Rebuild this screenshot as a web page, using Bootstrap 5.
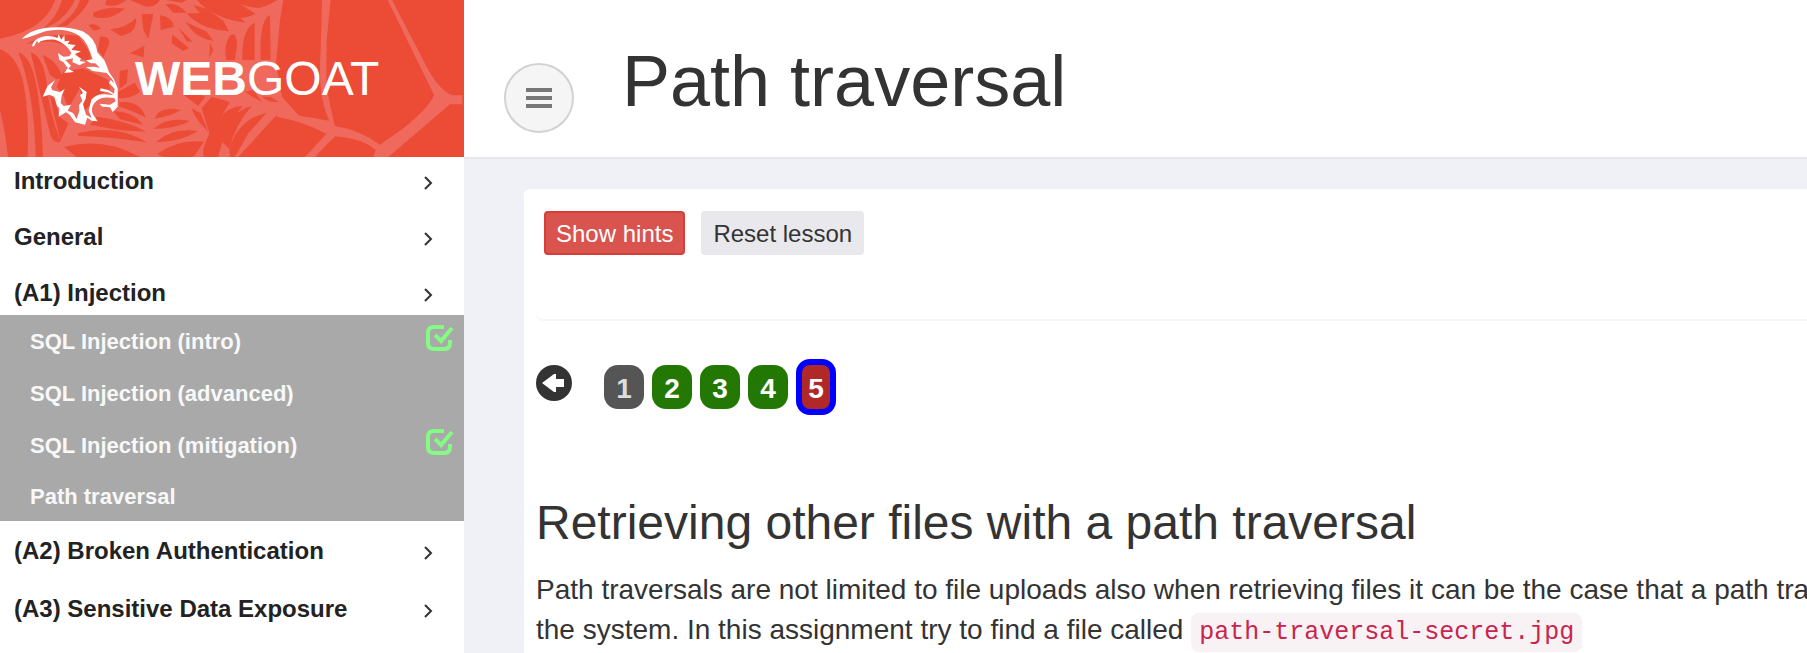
<!DOCTYPE html>
<html lang="en">
<head>
<meta charset="utf-8">
<meta name="viewport" content="width=device-width, initial-scale=1">
<title>WebGoat</title>
<link href="https://cdn.jsdelivr.net/npm/bootstrap@5.3.0/dist/css/bootstrap.min.css" rel="stylesheet">
<style>
body{font-family:"Liberation Sans",Arial,sans-serif;color:#333;background:#f0f1f7;overflow:hidden}
.side{width:464px;background:#fff}
.brand{height:157px;background:#ec4b36;overflow:hidden;padding-left:135px;color:#fff;font-size:48px;line-height:56px;position:relative}
.brand:hover{color:#fff}
.brand svg{position:absolute;left:0;top:0}
.brand span{position:relative}
.menu{gap:12px;padding-top:2px}
.menu.lower{gap:14px;padding-top:8px}
.menu a{height:44px;padding:0 31px 0 14px;font-size:24px;font-weight:700;color:#222}
.menu a svg{margin-top:4px}
.submenu{background:#a9a9a9}
.submenu a{height:52px;padding:0 10px 0 30px;font-size:22px;font-weight:700;color:#f8f8f8}
.submenu li:last-child a{height:50px}
.submenu svg{margin-bottom:6px}
.top-bar{height:159px;background:#fff;border-bottom:2px solid #e6e6eb;padding:0 40px}
.toggle{width:70px;height:70px;margin-top:39px;border:2px solid #d2d2d2;background:#f5f5f5}
.page-title{font-size:72px;line-height:80px;margin-left:48px;padding-top:4px}
.lesson{margin:30px 0 0 60px;padding-left:12px;background:#fff;border-radius:6px 0 0 0}
.tools{padding:22px 8px 64px;gap:16px;border-bottom-left-radius:8px;box-shadow:0 2px 1px #f7f7f7}
.tools .btn{height:44px;padding:0 10px;border-width:2px;font-size:24px;line-height:42px;border-radius:4px}
.hints{background:#d9534f;border-color:#d43f3a;color:#fff}
.reset{background:#e8e8ed;border-color:#e8e8ed;color:#333}
.pages{margin-top:40px;height:56px;gap:8px}
.back{width:36px;height:36px;margin-right:24px;margin-bottom:8px}
.step{width:40px;height:44px;border-radius:14px;background:#237804;color:#fff;font-size:28px;line-height:48px;font-weight:700}
.step.intro{background:#555;color:#ddd}
.step.current{height:56px;border:6px solid #00f;background:#b02828}
.lesson h2{font-size:48px;line-height:56px;margin:80px 0 19px}
.lesson p{font-size:28px;line-height:40px;white-space:nowrap}
.lesson code{font-family:"Liberation Mono",monospace;font-size:25px;color:#c7254e;background:#f9f2f4;padding:5px 8px;border-radius:8px}
</style>
</head>
<body>
<div class="d-flex min-vh-100">
<aside class="side flex-shrink-0">
<a href="#" class="brand d-flex align-items-center text-decoration-none">
<svg width="464" height="157" viewBox="0 0 1392 471" fill="none" aria-hidden="true">
<!-- spider web: pale silk field with the red gaps between threads -->
<path fill="#ef695d" d="M160 0H850L840 60 828 190 846 290 900 350 830 345 715 471H0V112Q130 85 160 0"/>
<g fill="#ec4b36">
<path d="M0 0H165Q135 90 0 116Z"/>
<path d="M186 0H225Q192 66 130 85 172 50 186 0M240 0H268Q255 30 222 58L200 78 168 80Q225 50 240 0"/>
<path d="M0 148Q48 165 68 240 88 330 83 471H24Q15 390 0 330Z"/>
<path d="M55 157Q92 170 108 250 125 340 129 471H107Q103 280 55 157"/>
<path d="M92 157Q130 170 140 250 145 330 182 424 160 435 150 400 125 300 92 157"/>
<path d="M78 132Q150 95 235 108L265 150 276 188 235 172Q205 122 130 125ZM128 165Q175 185 188 235L170 238 150 225ZM190 215L250 205 325 240 330 268 290 290 252 335 240 265 205 325 192 290 170 260Z"/>
<path d="M150 285L165 300 178 350 205 370 182 422Q160 340 150 285"/>
<path d="M320 0H378Q350 25 315 14ZM390 0H480Q465 27 430 17ZM280 38Q325 16 374 26 330 64 280 50M265 75Q290 68 302 86L282 92Z"/>
<path d="M408 54Q412 100 362 107L330 88Q380 84 408 54M425 42H460L445 117 430 90ZM480 46Q518 52 522 80L482 90ZM497 13Q530 5 560 38L520 38Z"/>
<path d="M560 40Q600 88 687 94L670 62 620 26 580 15 600 40ZM557 66Q590 118 640 122L620 95ZM535 82L578 125 560 124ZM517 104L567 144 550 153 515 130Z"/>
<path d="M590 0Q640 56 738 68L705 42 670 0ZM500 0H560L545 8Z"/>
<path d="M690 106Q712 108 710 150L680 180Q668 140 690 106M630 128L640 150 628 175Z"/>
<path d="M300 110Q330 108 328 130L310 172 294 150ZM390 160L433 137 431 172ZM359 213L384 208 380 250 358 267Z"/>
<path d="M355 275L404 248 420 275Q385 300 355 293ZM358 307Q420 300 437 352 405 335 358 320Z"/>
<path d="M340 334Q400 335 428 374L360 358ZM290 350Q390 365 438 395L355 390 270 374ZM234 400Q350 370 440 427 350 412 234 407ZM192 441Q310 410 420 471H230Z"/>
<path d="M463 356Q480 315 542 330 510 350 463 356ZM461 387Q500 350 570 363 530 385 461 387M468 427Q515 382 593 393 545 425 468 427M472 462Q530 418 612 425L580 471H490Z"/>
<path d="M550 284Q590 270 615 290L595 318ZM575 325L602 340 625 395Q590 365 575 325M605 325L635 290 690 306 630 405Z"/>
<path d="M610 448Q650 320 728 318 670 390 655 471H610ZM660 420Q690 335 755 318 705 375 688 447ZM688 450Q710 360 800 338L745 400 705 471H690Z"/>
<path d="M688 110Q705 90 711 125L705 180H680ZM727 180Q725 85 764 68L764 180ZM782 180Q777 60 810 45L812 180ZM735 275L757 290 785 305 760 270ZM785 290H812L835 305Q810 310 785 290"/>
<path d="M695 0H832Q800 20 775 24 730 20 695 0ZM622 0H702L767 42Q715 65 665 45Z"/>
<path d="M850 24Q890 0 915 0H970Q965 110 960 210 960 280 988 361 900 370 850 290 825 180 850 24"/>
</g>
<path fill="#ef695d" d="M966 0H992L980 120 979 260 1004 378Q1080 390 1140 434L1210 385Q1290 320 1302 285L1163 0H1176L1288 215Q1320 270 1355 286H1387V313H1350Q1260 390 1165 471H1120L1127 451Q1090 415 1005 409L944 471H915L979 401Q910 365 830 350V335L988 362Q952 290 962 150Z"/>
<!-- goat head -->
<g fill="#fff">
<path d="M65 117Q90 90 135 84 200 77 248 94 288 115 292 157L313 181Q321 197 327 217L342 238 353 265 353 320 338 336 330 322 307 320 298 311 330 314 347 304 343 294Q300 287 284 308 271 325 278 342L293 364 275 362 262 353 255 374 225 367 209 344 198 337 176 350 178 325 171 318 163 290 148 284 128 290 143 257 165 241 153 262 157 271 180 276 194 267 185 287 182 309 191 318 213 314 203 332 219 339 230 357 238 333 237 315 247 302 240 285 249 279 237 260 260 276 257 296 249 312 258 344 275 354 266 332 274 299Q290 281 315 283L342 286 324 277 300 273 302 265 325 270 342 281 344 267 327 248 332 240 344 251 336 237 320 219 278 213 258 201 284 200 300 204 286 190 272 190 258 181 278 178 270 155Q256 113 227 101 188 82 136 94L86 112Z"/>
<path d="M96 139Q98 119 125 111 149 104 173 114L175 103 184 119 193 105 194 124 209 122 203 132 227 135 214 149 243 154 224 163 243 176 239 183 258 186 238 196 217 186 219 175 196 180 213 197 205 206 222 216 193 219 203 204 190 186 178 180 174 159 190 170 208 169 214 159Q200 131 166 119 125 117 115 130L111 123 102 139Z"/>
</g>
</svg>
<span><b>WEB</b>GOAT</span></a>
<nav aria-label="Lessons">
<div class="menu d-flex flex-column">
<a href="#" class="d-flex align-items-center justify-content-between text-decoration-none">Introduction<svg width="9" height="14" viewBox="0 0 9 14" fill="none" stroke="#333" stroke-width="2"><path d="M1 1l6 6-6 6"/></svg></a>
<a href="#" class="d-flex align-items-center justify-content-between text-decoration-none">General<svg width="9" height="14" viewBox="0 0 9 14" fill="none" stroke="#333" stroke-width="2"><path d="M1 1l6 6-6 6"/></svg></a>
<a href="#" class="d-flex align-items-center justify-content-between text-decoration-none">(A1) Injection<svg width="9" height="14" viewBox="0 0 9 14" fill="none" stroke="#333" stroke-width="2"><path d="M1 1l6 6-6 6"/></svg></a>
</div>
<ul class="submenu list-unstyled mb-0">
<li><a href="#" class="d-flex align-items-center justify-content-between text-decoration-none">SQL Injection (intro)<svg width="29" height="28" viewBox="0 0 29 28" fill="none" stroke="#84fb84" stroke-width="4"><path d="M19 3H9Q3 3 3 9v10q0 6 6 6h10q6 0 6-6v-3"/><path d="M10 11l6 6L27 4"/></svg></a></li>
<li><a href="#" class="d-flex align-items-center text-decoration-none">SQL Injection (advanced)</a></li>
<li><a href="#" class="d-flex align-items-center justify-content-between text-decoration-none">SQL Injection (mitigation)<svg width="29" height="28" viewBox="0 0 29 28" fill="none" stroke="#84fb84" stroke-width="4"><path d="M19 3H9Q3 3 3 9v10q0 6 6 6h10q6 0 6-6v-3"/><path d="M10 11l6 6L27 4"/></svg></a></li>
<li><a href="#" class="d-flex align-items-center text-decoration-none">Path traversal</a></li>
</ul>
<div class="menu lower d-flex flex-column">
<a href="#" class="d-flex align-items-center justify-content-between text-decoration-none">(A2) Broken Authentication<svg width="9" height="14" viewBox="0 0 9 14" fill="none" stroke="#333" stroke-width="2"><path d="M1 1l6 6-6 6"/></svg></a>
<a href="#" class="d-flex align-items-center justify-content-between text-decoration-none">(A3) Sensitive Data Exposure<svg width="9" height="14" viewBox="0 0 9 14" fill="none" stroke="#333" stroke-width="2"><path d="M1 1l6 6-6 6"/></svg></a>
</div>
</nav>
</aside>
<div class="flex-grow-1 d-flex flex-column overflow-hidden">
<header class="top-bar d-flex align-items-center">
<button type="button" class="toggle rounded-circle p-0 d-flex align-items-center justify-content-center" aria-label="Toggle menu"><svg width="26" height="20" viewBox="0 0 26 20" fill="#777"><path d="M0 0h26v4H0zM0 8h26v4H0zM0 16h26v4H0z"/></svg></button>
<h1 class="page-title fw-normal mb-0">Path traversal</h1>
</header>
<main class="lesson flex-grow-1">
<div class="tools d-flex">
<button type="button" class="btn hints">Show hints</button>
<button type="button" class="btn reset">Reset lesson</button>
</div>
<nav class="pages d-flex align-items-center" aria-label="Lesson pages">
<a href="#" class="back d-flex" aria-label="Previous page"><svg width="36" height="36" viewBox="0 0 36 36"><circle cx="18" cy="18" r="18" fill="#333"/><path fill="#fff" d="M6 18L18 9h2v5h8v8h-8v5h-2z"/></svg></a>
<a href="#" class="step intro text-center text-decoration-none">1</a>
<a href="#" class="step text-center text-decoration-none">2</a>
<a href="#" class="step text-center text-decoration-none">3</a>
<a href="#" class="step text-center text-decoration-none">4</a>
<a href="#" class="step current text-center text-decoration-none" aria-current="page">5</a>
</nav>
<h2 class="fw-normal">Retrieving other files with a path traversal</h2>
<p class="mb-0">Path traversals are not limited to file uploads also when retrieving files it can be the case that a path tra<br>the system. In this assignment try to find a file called <code>path-traversal-secret.jpg</code></p>
</main>
</div>
</div>
<script src="https://cdn.jsdelivr.net/npm/bootstrap@5.3.0/dist/js/bootstrap.bundle.min.js"></script>
</body>
</html>
